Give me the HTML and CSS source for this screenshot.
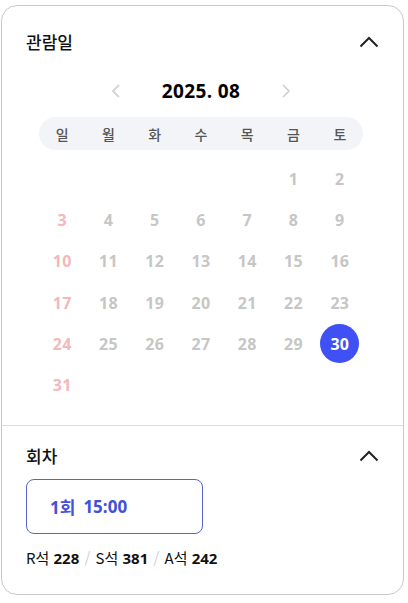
FILE: index.html
```html
<!DOCTYPE html>
<html lang="ko">
<head>
<meta charset="utf-8">
<title>관람일 선택</title>
<link rel="stylesheet" href="styles.css">
</head>
<body>
<div class="card">
  <section class="sec sec-date">
    <div class="head">
      <span class="title">관람일</span>
      <svg class="chev" width="20" height="12" viewBox="0 0 20 12"><polyline points="1.5,10.5 10,2 18.5,10.5" fill="none" stroke="#222" stroke-width="2"/></svg>
    </div>
    <div class="cal">
      <div class="month">
        <span class="arr prev"><svg width="10" height="16" viewBox="0 0 10 16"><polyline points="8,2 2,8 8,14" fill="none" stroke="#d6d6d6" stroke-width="2"/></svg></span>
        <span class="ym">2025. 08</span>
        <span class="arr next"><svg width="10" height="16" viewBox="0 0 10 16"><polyline points="2,2 8,8 2,14" fill="none" stroke="#cfcfcf" stroke-width="1.6"/></svg></span>
      </div>
      <div class="week">
        <span>일</span><span>월</span><span>화</span><span>수</span><span>목</span><span>금</span><span>토</span>
      </div>
      <div class="days">
        <span></span><span></span><span></span><span></span><span></span><span class="d">1</span><span class="d">2</span>
        <span class="d sun">3</span><span class="d">4</span><span class="d">5</span><span class="d">6</span><span class="d">7</span><span class="d">8</span><span class="d">9</span>
        <span class="d sun">10</span><span class="d">11</span><span class="d">12</span><span class="d">13</span><span class="d">14</span><span class="d">15</span><span class="d">16</span>
        <span class="d sun">17</span><span class="d">18</span><span class="d">19</span><span class="d">20</span><span class="d">21</span><span class="d">22</span><span class="d">23</span>
        <span class="d sun">24</span><span class="d">25</span><span class="d">26</span><span class="d">27</span><span class="d">28</span><span class="d">29</span><span class="d sel"><b>30</b></span>
        <span class="d sun">31</span>
      </div>
    </div>
  </section>
  <section class="sec sec-time">
    <div class="head">
      <span class="title">회차</span>
      <svg class="chev" width="20" height="12" viewBox="0 0 20 12"><polyline points="1.5,10.5 10,2 18.5,10.5" fill="none" stroke="#222" stroke-width="2"/></svg>
    </div>
    <button class="slot" type="button"><span>1회</span><span>15:00</span></button>
    <p class="seats">R석 <b>228</b> <i>/</i> S석 <b>381</b> <i>/</i> A석 <b>242</b></p>
  </section>
</div>
</body>
</html>
```
FILE: styles.css
```css
* { box-sizing: border-box; }
html, body { margin: 0; padding: 0; background: #fff; }
body {
  font-family: "Open Sans", "Noto Sans CJK KR", sans-serif;
  color: #111;
}
.card {
  margin: 5px 0 0 1px;
  width: 403px;
  border: 1px solid #c9c9c9;
  border-radius: 16px;
  background: #fff;
  overflow: hidden;
}
.sec { padding: 0 24px; }
.head {
  display: flex;
  align-items: center;
  justify-content: space-between;
  height: 28px;
}
.title {
  font-family: "Noto Sans CJK KR", sans-serif;
  font-size: 17px;
  font-weight: 500;
  color: #111;
  line-height: 28px;
}
.chev { display: block; }
.sec-date { padding-top: 22px; padding-bottom: 19px; }
.cal {
  width: 324px;
  margin: 0 0 0 13px;
}
.month {
  margin-top: 20px;
  height: 30px;
  display: flex;
  align-items: center;
  justify-content: center;
}
.arr {
  width: 20px;
  display: flex;
  justify-content: center;
  align-items: center;
}
.arr svg { display: block; }
.ym {
  width: 150px;
  text-align: center;
  font-size: 19px;
  font-weight: 700;
  color: #000;
  letter-spacing: 0.4px;
}
.week {
  margin-top: 11px;
  height: 33px;
  border-radius: 17px;
  background: #f3f4f8;
  display: grid;
  grid-template-columns: repeat(7, 1fr);
  align-items: center;
  text-align: center;
  font-family: "Noto Sans CJK KR", sans-serif;
  font-size: 14px;
  font-weight: 500;
  color: #555;
}
.days {
  margin-top: 8px;
  display: grid;
  grid-template-columns: repeat(7, 1fr);
  grid-auto-rows: 41.3px;
}
.d {
  display: flex;
  align-items: center;
  justify-content: center;
  font-size: 16px;
  font-weight: 700;
  letter-spacing: 0.3px;
  color: #c6c6c6;
}
.d.sun { color: #f3b7bc; }
.d.sel b {
  width: 39px;
  height: 39px;
  border-radius: 50%;
  background: #3f50f4;
  color: #fff;
  display: flex;
  align-items: center;
  justify-content: center;
  font-weight: 700;
}
.sec-time {
  border-top: 1px solid #dcdcdc;
  padding-top: 16px;
  padding-bottom: 26px;
}
.slot {
  margin-top: 9px;
  width: 177px;
  height: 55px;
  border: 1px solid #5a62d2;
  border-radius: 8px;
  background: #fff;
  display: flex;
  align-items: center;
  gap: 8px;
  padding: 0 0 0 23px;
  font-family: "Open Sans", "Noto Sans CJK KR", sans-serif;
  font-size: 17px;
  font-weight: 700;
  color: #4351d6;
  cursor: pointer;
}
.seats {
  margin: 14px 0 0;
  height: 20px;
  line-height: 20px;
  font-family: "Noto Sans CJK KR", sans-serif;
  font-size: 15px;
  color: #111;
}
.seats b { font-family: "Open Sans", sans-serif; font-weight: 700; }
.seats i { font-style: normal; color: #cfcfcf; margin: 0 1px; }
```
